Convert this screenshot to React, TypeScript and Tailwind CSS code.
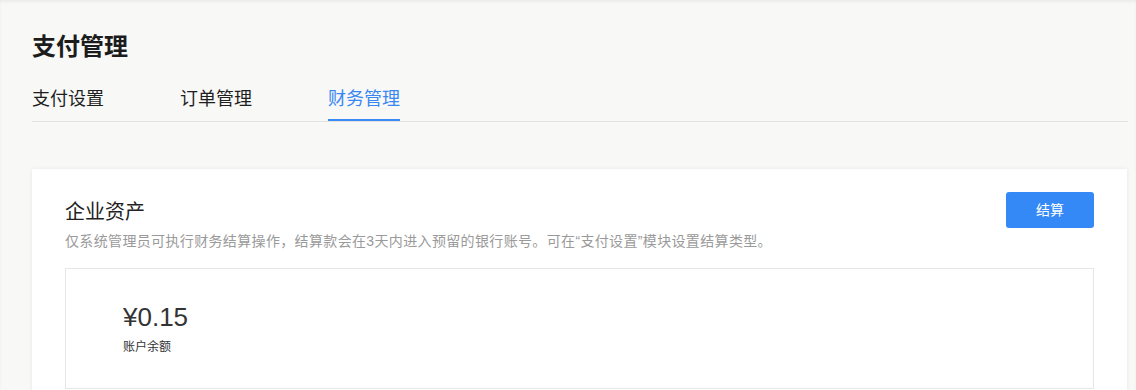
import React from "react";

const tabs = ["支付设置", "订单管理", "财务管理"];

const App = () => {
  const active = 2;

  return (
    <div
      className="min-h-[390px] bg-[#f8f8f7] shadow-[inset_0_2px_3px_rgba(0,0,0,0.05)]"
      style={{ fontFamily: '"Liberation Sans", "Noto Sans CJK SC", sans-serif' }}
    >
      <div className="px-8 pt-[31px] pr-[8px]">
        <h1 className="text-[24px] leading-[32px] font-bold text-[#1c1c1c]">支付管理</h1>

        {/* Tabs */}
        <div className="mt-[23px] flex gap-[76px] border-b border-[#e3e3e1]">
          {tabs.map((tab, i) => (
            <div
              key={tab}
              className={
                i === active
                  ? "pb-[7px] text-[18px] leading-[26px] border-b-2 border-[#3a89f5] text-[#3a87f2]"
                  : "pb-[7px] text-[18px] leading-[26px] border-b-2 border-transparent text-[#1f1f1f]"
              }
            >
              {tab}
            </div>
          ))}
        </div>

        {/* Card */}
        <div className="mt-[47px] mr-[1px] bg-white px-[33px] pt-[23px] pb-10 shadow-[0_0_4px_rgba(0,0,0,0.07)]">
          <div className="flex justify-between items-start">
            <div className="pt-[6px]">
              <h2 className="text-[20px] leading-[28px] text-[#222]">企业资产</h2>
              <p className="mt-[5px] text-[14px] leading-[20px] tracking-[0.35px] text-[#9a9a9a]">
                仅系统管理员可执行财务结算操作，结算款会在3天内进入预留的银行账号。可在“支付设置”模块设置结算类型。
              </p>
            </div>
            <button className="w-[88px] h-[36px] rounded-[3px] bg-[#3589f6] text-white text-[14px]">
              结算
            </button>
          </div>

          <div className="mt-[17px] h-[121px] border border-[#e6e6e6] pl-[57px] pt-[31px]">
            <div className="text-[26px] leading-[34px] text-[#333]">¥0.15</div>
            <div className="mt-[4px] text-[12px] leading-[18px] text-[#333]">账户余额</div>
          </div>
        </div>
      </div>
    </div>
  );
};

export default App;
